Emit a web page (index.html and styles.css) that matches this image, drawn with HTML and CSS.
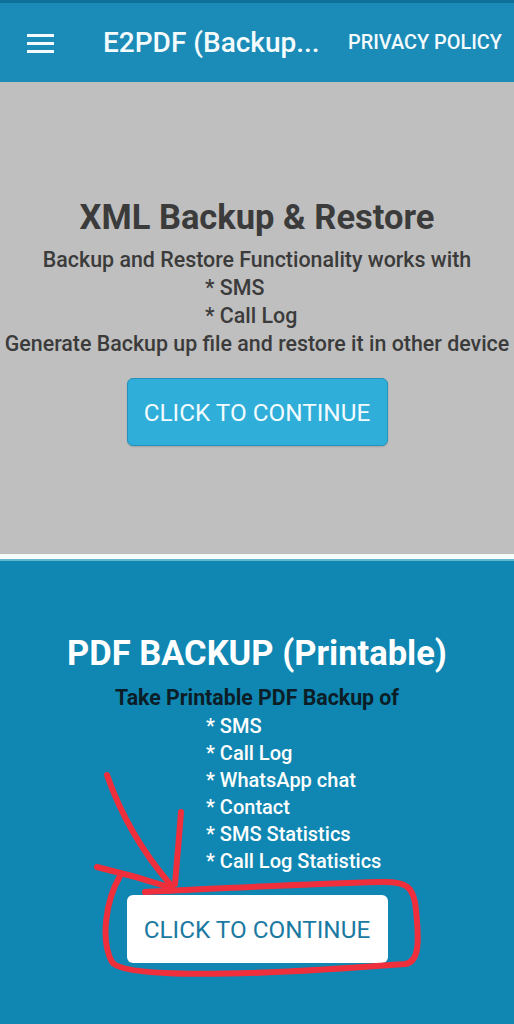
FILE: index.html
```html
<!DOCTYPE html>
<html lang="en">
<head>
    <meta charset="UTF-8">
    <meta name="viewport" content="width=device-width, initial-scale=1.0">
    <title>E2PDF (Backup &amp; Restore)</title>
    <link rel="stylesheet" href="styles.css">
</head>
<body>
    <div class="page">
        <header class="toolbar">
            <div class="menu-icon">
                <span></span><span></span><span></span>
            </div>
            <div class="toolbar-title">E2PDF (Backup...</div>
            <div class="toolbar-action">PRIVACY POLICY</div>
        </header>

        <!-- XML backup -->
        <section class="panel panel-gray">
            <h1 class="panel-title">XML Backup &amp; Restore</h1>
            <div class="panel-text">
                <div>Backup and Restore Functionality works with</div>
                <div class="item">* SMS</div>
                <div class="item">* Call Log</div>
                <div>Generate Backup up file and restore it in other device</div>
            </div>
            <button class="btn btn-blue">CLICK TO CONTINUE</button>
        </section>

        <div class="divider"></div>

        <!-- PDF backup -->
        <section class="panel panel-blue">
            <h1 class="panel-title">PDF BACKUP (Printable)</h1>
            <div class="panel-lead">Take Printable PDF Backup of</div>
            <ul class="backup-list">
                <li>* SMS</li>
                <li>* Call Log</li>
                <li>* WhatsApp chat</li>
                <li>* Contact</li>
                <li>* SMS Statistics</li>
                <li>* Call Log Statistics</li>
            </ul>
            <button class="btn btn-white">CLICK TO CONTINUE</button>
        </section>

        <!-- hand drawn marks over the screenshot -->
        <svg class="scribble" width="514" height="1024" viewBox="0 0 514 1024">
            <g fill="none" stroke="#ef2f3c" stroke-width="6" stroke-linecap="round" stroke-linejoin="round">
                <path d="M107 775 Q 128 835 170 884"/>
                <path d="M181 812 Q 178 850 175 884"/>
                <path d="M97 867 Q 135 876 172 888"/>
                <path d="M120 876 C 106 900, 100 940, 112 962 C 126 982, 300 972, 405 964 C 420 962, 419 940, 416 910 C 414 886, 406 881, 380 882 C 300 884, 210 889, 145 892"/>
            </g>
        </svg>
    </div>
</body>
</html>
```

FILE: styles.css
```css
body {
    margin: 0;
    font-family: Roboto, "Noto Sans", sans-serif;
    background-color: #0f87b2;
}
.page {
    position: relative;
    width: 514px;
    height: 1024px;
    overflow: hidden;
    display: flex;
    flex-direction: column;
}
.toolbar {
    height: 79px;
    border-top: 3px solid #0e7099;
    background-color: #1b8bb8;
    display: flex;
    align-items: center;
    padding: 0 12px 0 27px;
    color: #f4fbfd;
}
.menu-icon {
    width: 27px;
    display: flex;
    flex-direction: column;
    gap: 5px;
    margin-top: 1px;
}
.menu-icon span {
    height: 3px;
    background-color: #f4fbfd;
}
.toolbar-title {
    margin-left: 49px;
    font-size: 28px;
    font-weight: 500;
    flex: 1;
    white-space: nowrap;
}
.toolbar-action {
    font-size: 19.9px;
    font-weight: 500;
}
.panel {
    display: flex;
    flex-direction: column;
    align-items: center;
    text-align: center;
}
.panel-gray {
    height: 357px;
    padding-top: 115px;
    background-color: #bfbfbf;
    color: #3b3b3b;
}
.panel-title {
    margin: 0;
    font-size: 34.5px;
    line-height: 40px;
    font-weight: 700;
}
.panel-text {
    align-self: stretch;
    margin-top: 9px;
    font-size: 21.4px;
    line-height: 28px;
    font-weight: 500;
    white-space: nowrap;
}
.panel-text .item {
    text-align: left;
    padding-left: 205px;
}
.btn {
    width: 261px;
    height: 68px;
    border-radius: 6px;
    font-family: Roboto, "Noto Sans", sans-serif;
    font-size: 24.3px;
    font-weight: 400;
    cursor: pointer;
}
.btn-blue {
    margin-top: 20px;
    background-color: #2eaed9;
    border: 1px solid #2393bb;
    color: #f2fbfe;
    box-shadow: 0 1px 2px rgba(0, 0, 0, 0.15);
}
.divider {
    height: 5px;
    border-bottom: 2px solid #62b8d0;
    background-color: #f6fbfc;
}
.panel-blue {
    flex: 1;
    padding-top: 72px;
    background-color: #0f87b2;
    color: #ffffff;
}
.panel-lead {
    margin-top: 11px;
    font-size: 21.3px;
    line-height: 27px;
    font-weight: 700;
    color: #0b1d26;
}
.backup-list {
    list-style: none;
    margin: 2px 0 0;
    padding: 0 0 0 206px;
    align-self: stretch;
    text-align: left;
    font-size: 20px;
    line-height: 27px;
    font-weight: 500;
}
.btn-white {
    margin-top: 20px;
    background-color: #ffffff;
    border: none;
    color: #1b7aa2;
}
.scribble {
    position: absolute;
    left: 0;
    top: 0;
}
```
